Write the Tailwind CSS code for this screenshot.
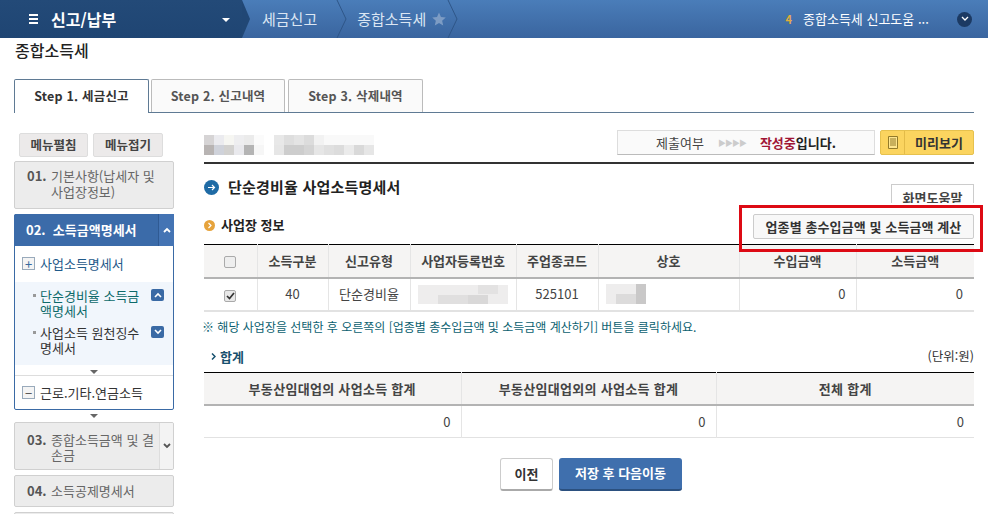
<!DOCTYPE html>
<html lang="ko">
<head>
<meta charset="UTF-8">
<title>종합소득세</title>
<script src="https://cdn.jsdelivr.net/npm/@tailwindcss/browser@4"></script>
</head>
<body class="relative w-[988px] h-[514px] overflow-hidden bg-white text-[13px] text-[#333] font-['Noto_Sans_CJK_KR','Liberation_Sans',sans-serif]">

<!-- top bar -->
<header class="flex items-center h-[38px] bg-gradient-to-b from-[#4a7db9] to-[#3a659f] text-white">
  <div class="relative flex items-center w-[242px] h-full pl-[29px] bg-gradient-to-b from-[#234a78] to-[#1f4573]">
    <span class="flex flex-col gap-[2px] w-[9px]"><i class="h-[2px] bg-white"></i><i class="h-[2px] bg-white"></i><i class="h-[2px] bg-white"></i></span>
    <span class="ml-[13px] text-[16px] font-bold">신고/납부</span>
    <span class="absolute left-[222px] top-[18px] border-x-[4px] border-x-transparent border-t-[4px] border-t-white"></span>
    <svg class="absolute left-[242px] top-0" width="9" height="38"><path d="M0 0L8 19L0 38Z" fill="#214775"/></svg>
  </div>
  <div class="flex items-center h-full ml-[20px] text-[15px] text-[#dbe6f3]">
    <span>세금신고</span>
    <svg class="ml-[19px]" width="12" height="38"><path d="M1 0L10 19L1 38" fill="none" stroke="#2f5688"/></svg>
    <span class="ml-[9px]">종합소득세</span>
    <svg class="ml-[6px]" width="14" height="14" viewBox="0 0 24 24"><path d="M12 1l3.400 7.600 8.200.8-6.200 5.500 1.800 8.100-7.200-4.200L4.800 23l1.800-8.100L.4 9.400l8.200-.8z" fill="#7d9cc4"/></svg>
    <svg class="ml-[1px]" width="12" height="38"><path d="M1 0L10 19L1 38" fill="none" stroke="#2f5688"/></svg>
  </div>
  <div class="flex items-center ml-auto mr-[16px]">
    <span class="text-[11px] font-bold text-[#e0ad3c]">4</span>
    <span class="ml-[11px] w-[130px] text-[13px] whitespace-nowrap">종합소득세 신고도움 ...</span>
    <span class="flex items-center justify-center ml-[24px] w-[15px] h-[15px] rounded-full bg-[#1c3a63]">
      <svg width="8" height="6"><path d="M1 1l3 3 3-3" fill="none" stroke="#fff" stroke-width="1.300"/></svg>
    </span>
  </div>
</header>

<h1 class="pl-[15px] h-[42px] text-[16px] leading-[24px] font-medium text-[#222]">종합소득세</h1>

<!-- tabs -->
<nav class="flex items-end gap-[2px] h-[33px] ml-[14px] mr-[14px] border-b border-[#5f7a94] font-bold text-[12.500px] tracking-[0.2px] text-[#555]">
  <a class="flex items-center justify-center w-[135px] h-[34px] -mb-px bg-white border border-b-0 border-[#5f7a94] rounded-t-[2px] text-[#333]">Step 1. 세금신고</a>
  <a class="flex items-center justify-center w-[134px] h-[33px] bg-[#fafafa] border border-b-0 border-[#bbb] rounded-t-[2px]">Step 2. 신고내역</a>
  <a class="flex items-center justify-center w-[135px] h-[33px] ml-[1px] bg-[#fafafa] border border-b-0 border-[#bbb] rounded-t-[2px]">Step 3. 삭제내역</a>
</nav>

<div class="flex">
  <!-- side menu -->
  <aside class="w-[160px] ml-[14px] pt-[20px] shrink-0">
    <div class="flex gap-[5px] ml-[5px] mb-[4px] font-bold text-[12.500px] text-[#444]">
      <button class="w-[69px] h-[24px] bg-[#eceaea] border border-[#ddd] rounded-[2px]">메뉴펼침</button>
      <button class="w-[70px] h-[24px] bg-[#eceaea] border border-[#ddd] rounded-[2px]">메뉴접기</button>
    </div>
    <div class="flex h-[48px] pl-[12px] pt-[6px] bg-[#ececec] border border-[#d0d0d0] rounded-[2px] leading-[16px] text-[#666]">
      <b class="w-[24px] shrink-0 text-[#555]">01.</b><span class="w-[106px]">기본사항(납세자 및 사업장정보)</span>
    </div>
    <div class="mt-[5px] border border-[#3a6aa5] rounded-[2px] h-[196px]">
      <div class="flex items-center justify-between h-[32px] -m-px bg-[#3b6ba9] text-white font-bold rounded-t-[2px]">
        <span class="pl-[12px]">02. &nbsp;소득금액명세서</span>
        <span class="flex items-center justify-center w-[16px] h-full bg-[#4474b4] border-l border-[#2f5a93]">
          <svg width="8" height="6"><path d="M1 5l3-3 3 3" fill="none" stroke="#fff" stroke-width="1.800"/></svg>
        </span>
      </div>
      <div class="flex items-center h-[37px] pl-[7px] text-[#1f5a8a]">
        <span class="flex items-center justify-center w-[13px] h-[13px] mr-[5px] bg-[#f4f4f4] border border-[#9ab] text-[13px] leading-none text-[#36699e]">+</span>사업소득명세서
      </div>
      <div class="h-[83px] pt-[6px] pl-[18px] bg-[#f1f6fc] leading-[15px]">
        <div class="flex h-[37px] text-[#0d6a6a]">
          <i class="mt-[6px] mr-[4px] w-[3px] h-[3px] shrink-0 bg-[#999]"></i>
          <span class="w-[103px] shrink-0">단순경비율 소득금액명세서</span>
          <span class="flex items-center justify-center mt-[1px] ml-[8px] w-[13px] h-[12px] rounded-[2px] bg-[#3a6aa5]"><svg width="8" height="6"><path d="M1 5l3-3 3 3" fill="none" stroke="#fff" stroke-width="1.600"/></svg></span>
        </div>
        <div class="flex text-[#333]">
          <i class="mt-[6px] mr-[4px] w-[3px] h-[3px] shrink-0 bg-[#999]"></i>
          <span class="w-[103px] shrink-0">사업소득 원천징수 명세서</span>
          <span class="flex items-center justify-center mt-[1px] ml-[8px] w-[13px] h-[12px] rounded-[2px] bg-[#3a6aa5]"><svg width="8" height="6"><path d="M1 1l3 3 3-3" fill="none" stroke="#fff" stroke-width="1.600"/></svg></span>
        </div>
      </div>
      <div class="flex justify-center items-end h-[11px] pb-[1px] bg-white border-b border-[#ddd]"><i class="border-x-[4px] border-x-transparent border-t-[4px] border-t-[#666]"></i></div>
      <div class="flex items-center h-[33px] pl-[7px] text-[#333]">
        <span class="flex items-center justify-center w-[13px] h-[13px] mr-[5px] bg-[#f4f4f4] border border-[#9ab] text-[13px] leading-none text-[#555]">−</span>근로.기타.연금소득
      </div>
    </div>
    <div class="flex justify-center items-center h-[12px]"><i class="border-x-[4px] border-x-transparent border-t-[4px] border-t-[#666]"></i></div>
    <div class="flex h-[48px] pl-[12px] pt-[9px] bg-[#ececec] border border-[#d0d0d0] rounded-[2px] leading-[15px] text-[#666] overflow-hidden">
      <b class="w-[24px] shrink-0 text-[#555]">03.</b><span class="w-[108px] shrink-0">종합소득금액 및 결손금</span>
      <span class="flex items-center justify-center w-[15px] h-[46px] -mt-[9px] shrink-0 bg-[#f3f3f3] border-l border-[#ddd]"><svg width="8" height="6"><path d="M1 1l3 3 3-3" fill="none" stroke="#555" stroke-width="1.800"/></svg></span>
    </div>
    <div class="flex items-center h-[32px] mt-[5px] pl-[12px] bg-[#ececec] border border-[#d0d0d0] rounded-[2px] text-[#666]">
      <b class="w-[24px] text-[#555]">04.</b>소득공제명세서
    </div>
    <div class="h-[32px] mt-[5px] bg-[#ececec] border border-[#d0d0d0] rounded-[2px]"></div>
  </aside>

  <!-- main -->
  <main class="w-[770px] ml-[30px]">
    <div class="flex items-center h-[51px] pt-[20px] border-b-2 border-[#333]">
      <!-- masked taxpayer name -->
      <svg width="170" height="20" class="shrink-0 -mt-[5px]">
        <rect x="0" width="10" height="10" fill="#d6d4d5"/><rect x="10" width="10" height="10" fill="#ebebef"/><rect x="20" width="10" height="10" fill="#f6f6f2"/><rect x="30" width="10" height="10" fill="#eeeef0"/><rect x="40" width="10" height="10" fill="#ebebeb"/><rect x="50" width="10" height="10" fill="#fbfbfb"/>
        <rect x="0" y="10" width="10" height="10" fill="#b8b4b3"/><rect x="10" y="10" width="10" height="10" fill="#cfd2da"/><rect x="20" y="10" width="10" height="10" fill="#d2d1cf"/><rect x="30" y="10" width="10" height="10" fill="#e9e9ed"/><rect x="40" y="10" width="10" height="10" fill="#b4b4b4"/><rect x="50" y="10" width="10" height="10" fill="#f6f6f6"/>
        <rect x="70" width="10" height="10" fill="#e8e8e8"/><rect x="80" width="10" height="10" fill="#dedede"/><rect x="90" width="10" height="10" fill="#e4e4e4"/><rect x="100" width="10" height="10" fill="#dcdcdc"/><rect x="110" width="10" height="10" fill="#f2f2f2"/><rect x="120" width="50" height="10" fill="#f9f9f9"/>
        <rect x="70" y="10" width="10" height="10" fill="#e6e6e6"/><rect x="80" y="10" width="20" height="10" fill="#cdcdcd"/><rect x="100" y="10" width="10" height="10" fill="#d4d4d4"/><rect x="110" y="10" width="10" height="10" fill="#e6e6e6"/><rect x="120" y="10" width="10" height="10" fill="#e0e0e0"/><rect x="130" y="10" width="10" height="10" fill="#dcdcdc"/><rect x="140" y="10" width="10" height="10" fill="#ebebeb"/><rect x="150" y="10" width="10" height="10" fill="#d9d9d9"/><rect x="160" y="10" width="10" height="10" fill="#e6e6e6"/>
      </svg>
      <div class="flex items-center justify-center ml-auto w-[258px] h-[25px] -mt-[10px] bg-[#fafafa] border border-[#ddd] border-b-[#bbb]">
        <span class="text-[#444]">제출여부</span>
        <span class="mx-[14px] text-[8px] tracking-[-1px] text-[#ccc]">▶▶▶▶</span>
        <b class="text-[#a01535]">작성중</b><b class="text-[#222]">입니다.</b>
      </div>
      <div class="flex items-center ml-[5px] w-[94px] h-[25px] -mt-[10px] bg-[#fbd45f] border border-[#e6c14e] rounded-[2px] font-bold text-[#333]">
        <span class="flex items-center justify-center w-[24px] h-full border-r border-[#e3bb48]"><svg width="10" height="13"><path d="M.5.500h9v12h-9zM2 3h6M2 5h6M2 7h6M2 9h6" fill="#fde58e" stroke="#927a2a"/></svg></span>
        <span class="flex-1 text-center">미리보기</span>
      </div>
    </div>

    <div class="relative flex items-center h-[50px] pb-[3px]">
      <svg width="15" height="15"><circle cx="7.500" cy="7.500" r="7.500" fill="#1f6ba5"/><path d="M4 7.500h6M8 5l2.500 2.500L8 10" fill="none" stroke="#fff" stroke-width="1.200"/></svg>
      <h2 class="ml-[9px] text-[15px] tracking-[0.2px] font-bold text-[#222]">단순경비율 사업소득명세서</h2>
      <button class="absolute right-0 top-[20px] w-[83px] h-[19px] pt-[3px] bg-white border border-b-0 border-[#ccc] font-bold text-[#444] overflow-hidden">화면도움말</button>
    </div>

    <div class="flex items-center h-[25px]">
      <svg width="11" height="11" class="-mt-[3px]"><circle cx="5.500" cy="5.500" r="5.500" fill="#e6a33c"/><path d="M4.500 3l2.500 2.500L4.500 8" fill="none" stroke="#fff" stroke-width="1.200"/></svg>
      <h3 class="ml-[6px] -mt-[3px] font-bold text-[#222]">사업장 정보</h3>
      <button class="ml-auto w-[221px] h-[25px] bg-[#f8f8f8] border border-[#ccc] rounded-[2px] font-bold tracking-[0.1px] text-[#333]">업종별 총수입금액 및 소득금액 계산</button>
    </div>

    <table class="table-fixed w-full mt-[5px] border-t border-black text-center">
      <colgroup><col class="w-[53px]"><col class="w-[71px]"><col class="w-[82px]"><col class="w-[106px]"><col class="w-[82px]"><col class="w-[141px]"><col class="w-[117px]"><col class="w-[118px]"></colgroup>
      <thead class="bg-[#f5f4f3] font-bold text-[#444]">
        <tr class="h-[33px] border-b-2 border-[#b3b3b3]">
          <th class="border-r border-[#e5e5e5]"><span class="inline-block w-[12px] h-[12px] align-middle bg-[#eee] border border-[#aaa] rounded-[2px]"></span></th>
          <th class="border-r border-[#e5e5e5]">소득구분</th>
          <th class="border-r border-[#e5e5e5]">신고유형</th>
          <th class="border-r border-[#e5e5e5]">사업자등록번호</th>
          <th class="border-r border-[#e5e5e5]">주업종코드</th>
          <th class="border-r border-[#e5e5e5]">상호</th>
          <th class="border-r border-[#e5e5e5]">수입금액</th>
          <th>소득금액</th>
        </tr>
      </thead>
      <tbody class="text-[#444]">
        <tr class="h-[33px] border-b-2 border-[#e2e2e2]">
          <td class="border-r border-[#e5e5e5]"><span class="inline-flex items-center justify-center w-[12px] h-[12px] align-middle bg-[#e8e8e8] border border-[#aaa] rounded-[2px]"><svg width="9" height="8"><path d="M1 4l2.500 2.500L8 1" fill="none" stroke="#333" stroke-width="1.700"/></svg></span></td>
          <td class="border-r border-[#e5e5e5]">40</td>
          <td class="border-r border-[#e5e5e5]">단순경비율</td>
          <td class="border-r border-[#e5e5e5]"><svg width="90" height="19" class="mx-auto"><rect width="90" height="19" fill="#eeeded"/><rect x="20" y="10" width="30" height="9" fill="#e0dfdf"/><rect x="60" y="0" width="20" height="9" fill="#e3e2e2"/><rect x="50" y="10" width="20" height="9" fill="#d9d8d8"/></svg></td>
          <td class="border-r border-[#e5e5e5]">525101</td>
          <td class="border-r border-[#e5e5e5] pl-[7px]"><svg width="40" height="20" class="block"><rect width="40" height="20" fill="#eeeded"/><rect x="10" y="10" width="20" height="10" fill="#dcdbdb"/><rect x="30" y="0" width="10" height="20" fill="#c9c8c8"/></svg></td>
          <td class="border-r border-[#e5e5e5] text-right pr-[10px]">0</td>
          <td class="text-right pr-[11px]">0</td>
        </tr>
      </tbody>
    </table>

    <p class="h-[28px] mt-[7px] ml-[-2px] text-[12px] leading-[16px] text-[#0b5f70] whitespace-nowrap">※ 해당 사업장을 선택한 후 오른쪽의 [업종별 총수입금액 및 소득금액 계산하기] 버튼을 클릭하세요.</p>

    <div class="flex items-center justify-between h-[20px] pl-[7px]">
      <span class="flex items-center font-bold text-[#17506e]"><svg width="5" height="7" class="mr-[4px]"><path d="M1 .5l3 3-3 3" fill="none" stroke="#17506e" stroke-width="1.500"/></svg>합계</span>
      <span class="text-[12.500px] text-[#333]">(단위:원)</span>
    </div>

    <table class="table-fixed w-full mt-[5px] border-t border-black text-center">
      <colgroup><col class="w-[257px]"><col class="w-[255px]"><col class="w-[258px]"></colgroup>
      <thead class="bg-[#f5f4f3] font-bold tracking-[0.3px] text-[#444]">
        <tr class="h-[33px] border-b-2 border-[#b3b3b3]">
          <th class="border-r border-[#e5e5e5]">부동산임대업의 사업소득 합계</th>
          <th class="border-r border-[#e5e5e5]">부동산임대업외의 사업소득 합계</th>
          <th>전체 합계</th>
        </tr>
      </thead>
      <tbody class="text-right text-[#444]">
        <tr class="h-[32px] border-b border-[#e2e2e2]">
          <td class="border-r border-[#e5e5e5] pr-[10px]">0</td>
          <td class="border-r border-[#e5e5e5] pr-[10px]">0</td>
          <td class="pr-[10px]">0</td>
        </tr>
      </tbody>
    </table>

    <div class="flex justify-center gap-[6px] mt-[20px] pl-[4px] font-bold">
      <button class="w-[53px] h-[33px] bg-white border border-[#ccc] border-b-2 border-b-[#aaa] rounded-[3px] text-[#333]">이전</button>
      <button class="w-[123px] h-[33px] bg-[#3f6fad] border-b-2 border-[#2b507f] rounded-[3px] text-white">저장 후 다음이동</button>
    </div>
  </main>
</div>

<!-- annotation drawn over the screenshot -->
<div class="absolute left-[739px] top-[205px] w-[244px] h-[47px] border-[3px] border-[#dd0a14]"></div>
</body>
</html>
